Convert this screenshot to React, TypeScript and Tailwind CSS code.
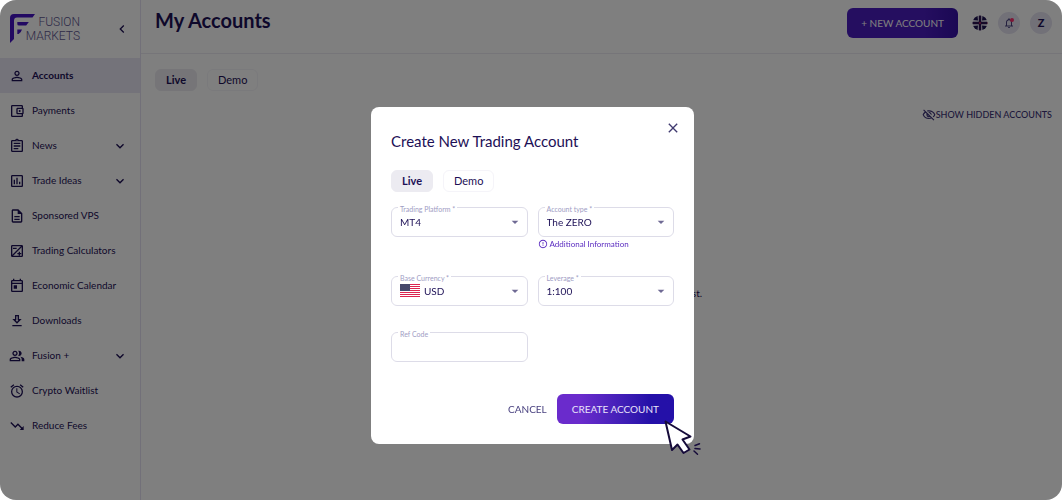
import { useState } from "react";
import type { ReactNode } from "react";
import type { IconType } from "react-icons";
import {
  MdArrowDropDown,
  MdChevronLeft,
  MdClose,
  MdErrorOutline,
  MdKeyboardArrowDown,
  MdNotificationsNone,
  MdOutlineAccountBalanceWallet,
  MdOutlineAlarm,
  MdOutlineAssessment,
  MdOutlineAssignment,
  MdOutlineDescription,
  MdOutlineDownload,
  MdOutlinePeopleAlt,
  MdOutlinePersonOutline,
  MdOutlineToday,
  MdOutlineVisibilityOff,
  MdTrendingDown,
} from "react-icons/md";

interface NavItem {
  label: string;
  icon: IconType | typeof CalculatorIcon;
  expandable?: boolean;
}

const navItems: NavItem[] = [
  { label: "Accounts", icon: MdOutlinePersonOutline },
  { label: "Payments", icon: MdOutlineAccountBalanceWallet },
  { label: "News", icon: MdOutlineAssignment, expandable: true },
  { label: "Trade Ideas", icon: MdOutlineAssessment, expandable: true },
  { label: "Sponsored VPS", icon: MdOutlineDescription },
  { label: "Trading Calculators", icon: CalculatorIcon },
  { label: "Economic Calendar", icon: MdOutlineToday },
  { label: "Downloads", icon: MdOutlineDownload },
  { label: "Fusion +", icon: MdOutlinePeopleAlt, expandable: true },
  { label: "Crypto Waitlist", icon: MdOutlineAlarm },
  { label: "Reduce Fees", icon: MdTrendingDown },
];

// plus / minus box with a diagonal
function CalculatorIcon({ className }: { className?: string }) {
  return (
    <svg viewBox="0 0 24 24" className={className} fill="none" stroke="currentColor" strokeWidth="2" aria-hidden="true">
      <rect x="4" y="4" width="16" height="16" rx="1" />
      <path d="M4.500 19.500L19.500 4.500M6 8H11.500M12.500 16H18.500M15.500 13V19" />
    </svg>
  );
}

function Logo() {
  return (
    <svg width="72" height="32" viewBox="0 0 72 32" role="img" aria-label="Fusion Markets">
      <g fill="#4412c4">
        <path d="M0 30V5Q0 1 4 1H25L22.500 4.600H7Q4 4.600 4 8V26Z" />
        <path d="M7.300 9H18.800L16.200 12.600H9Q7.300 12.600 7.300 11Z" />
        <path d="M7.300 16.600H12L10.800 19L8.600 21H7.300Z" />
      </g>
      <g fill="#5c5590" fontFamily="Roboto, sans-serif" fontWeight="300" fontSize="12" textAnchor="end">
        <text x="70" y="13">FUSION</text>
        <text x="70" y="27">MARKETS</text>
      </g>
    </svg>
  );
}

function UkFlag() {
  return (
    <svg width="16" height="16" viewBox="0 0 16 16" aria-hidden="true">
      <clipPath id="uk">
        <circle cx="8" cy="8" r="7.500" />
      </clipPath>
      <g clipPath="url(#uk)">
        <rect width="16" height="16" fill="#e8e6f2" />
        <path
          d="M1 5L6 5.500L5.500 1L2 2ZM15 5L10 5.500L10.500 1L14 2ZM1 11L6 10.500L5.500 15L2 14ZM15 11L10 10.500L10.500 15L14 14Z"
          fill="#1c1250"
        />
        <path d="M8 0V16M0 8H16" stroke="#2a1250" strokeWidth="2.400" />
        <path d="M7.300 8H8.700M15 8H16" stroke="#f02860" strokeWidth="1.500" />
      </g>
    </svg>
  );
}

function UsFlag() {
  return (
    <svg width="20" height="14" viewBox="0 0 20 14" className="shrink-0" aria-hidden="true">
      <rect width="20" height="13" fill="#fff" />
      {[0, 2, 4, 6, 8, 10, 12].map((y) => (
        <rect key={y} y={y} width="20" height="1" fill="#dc2450" />
      ))}
      <rect width="10" height="7" fill="#45476b" />
    </svg>
  );
}

function ClickCursor() {
  return (
    <svg
      width="38"
      height="36"
      viewBox="0 0 38 36"
      className="pointer-events-none absolute -right-7 -bottom-8"
      aria-hidden="true"
    >
      <g stroke="#160b3a" strokeWidth="2" strokeLinecap="round" strokeLinejoin="round">
        <path d="M1.500 1.500L26.500 16.500L18.500 19.500L25.500 29.500L19.500 33L13.500 24.500L8 30Z" fill="#fff" />
        <path d="M31 25.500L35.500 23.800M31 28.500L36 29M30 31L33.500 34.200" fill="none" strokeWidth="1.500" />
      </g>
    </svg>
  );
}

interface TabsProps {
  value: string;
  onChange: (value: string) => void;
}

function AccountTabs({ value, onChange }: TabsProps) {
  return (
    <div className="flex gap-2.5">
      {["Live", "Demo"].map((tab) => (
        <button
          key={tab}
          type="button"
          onClick={() => onChange(tab)}
          className={`h-[22px] rounded-md border px-2.5 text-[11px] ${
            value === tab
              ? "border-[#ecebf1] bg-[#ecebf1] font-bold"
              : "border-[#f5f4f9]"
          }`}
        >
          {tab}
        </button>
      ))}
    </div>
  );
}

interface FieldProps {
  id: string;
  label: string;
  children: ReactNode;
}

function Field({ id, label, children }: FieldProps) {
  return (
    <div className="relative flex h-[30px] items-center rounded-md border border-[#dddce8] px-2">
      <label
        htmlFor={id}
        className="absolute -top-1 left-1.5 bg-white px-0.5 text-[7px] leading-[10px] text-[#a09dc4]"
      >
        {label}
      </label>
      {children}
    </div>
  );
}

function Select({ id, options }: { id: string; options: string[] }) {
  return (
    <>
      <select id={id} className="min-w-0 flex-1 appearance-none bg-transparent text-[10px] outline-none">
        {options.map((option) => (
          <option key={option}>{option}</option>
        ))}
      </select>
      <MdArrowDropDown className="pointer-events-none -mr-1 size-4 text-[#6f6a94]" />
    </>
  );
}

function Sidebar() {
  return (
    <aside className="w-[141px] shrink-0 border-r border-[#e4e1f2]">
      <div className="flex h-[58px] items-center justify-between px-2.5">
        <Logo />
        <button type="button" aria-label="Collapse menu">
          <MdChevronLeft className="size-4" />
        </button>
      </div>
      <nav>
        <ul>
          {navItems.map(({ label, icon: Icon, expandable }, index) => (
            <li key={label}>
              <a
                href="#"
                className={`flex h-[35px] items-center gap-[7px] pr-3 pl-[9px] text-[10px] ${
                  index === 0 ? "bg-[#e9e6f5] font-bold" : ""
                }`}
              >
                <Icon className="size-4 shrink-0" />
                <span className="flex-1 whitespace-nowrap">{label}</span>
                {expandable && <MdKeyboardArrowDown className="size-4" />}
              </a>
            </li>
          ))}
        </ul>
      </nav>
    </aside>
  );
}

function CreateAccountModal({ onClose }: { onClose: () => void }) {
  const [type, setType] = useState("Live");

  return (
    <div className="fixed inset-0 flex items-start justify-center overflow-hidden rounded-2xl bg-black/50 pt-[107px] pl-[3px]">
      <div
        role="dialog"
        aria-labelledby="modal-title"
        className="relative w-[323px] rounded-lg bg-white px-5 pt-6 pb-5"
      >
        <button type="button" aria-label="Close" onClick={onClose} className="absolute top-[13px] right-[13px] text-[#403a70]">
          <MdClose className="size-4" />
        </button>
        <h2 id="modal-title" className="mb-[19px] text-[15px] leading-5">
          Create New Trading Account
        </h2>
        <AccountTabs value={type} onChange={setType} />

        <form onSubmit={(e) => e.preventDefault()}>
          <div className="mt-[15px] grid grid-cols-2 gap-x-2.5">
            <Field id="platform" label="Trading Platform *">
              <Select id="platform" options={["MT4", "MT5"]} />
            </Field>
            <div className="h-[69px]">
              <Field id="account-type" label="Account type *">
                <Select id="account-type" options={["The ZERO", "Classic"]} />
              </Field>
              <a href="#" className="mt-px flex items-center gap-0.5 text-[8px] leading-3 text-[#5a2bc0]">
                <MdErrorOutline className="size-2.5" />
                Additional Information
              </a>
            </div>
            <Field id="currency" label="Base Currency *">
              <span className="mr-1 flex">
                <UsFlag />
              </span>
              <Select id="currency" options={["USD", "EUR", "GBP", "AUD"]} />
            </Field>
            <div className="h-[56px]">
              <Field id="leverage" label="Leverage *">
                <Select id="leverage" options={["1:100", "1:200", "1:500"]} />
              </Field>
            </div>
            <Field id="ref-code" label="Ref Code">
              <input id="ref-code" type="text" className="w-full bg-transparent text-[10px] outline-none" />
            </Field>
          </div>

          <div className="mt-8 flex items-center justify-end gap-2.5">
            <button type="button" onClick={onClose} className="text-[10px] text-[#4a4280]">
              CANCEL
            </button>
            <div className="relative">
              <button
                type="submit"
                className="h-[30px] rounded-md bg-linear-to-r from-[#6a2bcc] from-20% to-[#2410a8] to-80% px-[15px] text-[10px] text-[#e8e3fa]"
              >
                CREATE ACCOUNT
              </button>
              <ClickCursor />
            </div>
          </div>
        </form>
      </div>
    </div>
  );
}

export default function App() {
  const [tab, setTab] = useState("Live");
  const [open, setOpen] = useState(true);

  return (
    <div className="flex min-h-screen overflow-hidden rounded-2xl bg-white font-['Lato',sans-serif] text-[#1d1056]">
      <Sidebar />

      <div className="flex flex-1 flex-col">
        {/* Header */}
        <header className="flex h-[54px] items-center border-b border-[#eceaf2] pr-2.5 pb-[7px] pl-3.5">
          <h1 className="flex-1 pb-1.5 text-xl font-bold">My Accounts</h1>
          <button
            type="button"
            onClick={() => setOpen(true)}
            className="h-[30px] rounded-md bg-linear-to-r from-[#4a1cc0] from-70% to-[#3610a8] px-3.5 text-[10px] text-white"
          >
            + NEW ACCOUNT
          </button>
          <button type="button" aria-label="Language" className="ml-3.5">
            <UkFlag />
          </button>
          <button
            type="button"
            aria-label="Notifications"
            className="relative ml-2.5 flex size-[22px] items-center justify-center rounded-full bg-[#e4e2f0]"
          >
            <MdNotificationsNone className="size-3 text-[#4a4280]" />
            <span className="absolute top-1.5 right-1.5 size-1 rounded-full bg-[#ff2c6c]" />
          </button>
          <button
            type="button"
            aria-label="Profile"
            className="ml-2.5 size-[22px] rounded-full bg-[#e4e2f0] text-[11px] font-black"
          >
            Z
          </button>
        </header>

        {/* Accounts list */}
        <main className="flex flex-1 flex-col pt-[15px] pr-2.5 pl-3.5">
          <AccountTabs value={tab} onChange={setTab} />
          <button
            type="button"
            className="mt-[17px] flex items-center self-end text-[9px] leading-3 font-medium text-[#3d3378]"
          >
            <MdOutlineVisibilityOff className="size-3.5" />
            SHOW HIDDEN ACCOUNTS
          </button>
          <p className="mt-[164px] text-center text-[10px]">
            You do not have any Live accounts in this list.
          </p>
        </main>
      </div>

      {open && <CreateAccountModal onClose={() => setOpen(false)} />}
    </div>
  );
}
